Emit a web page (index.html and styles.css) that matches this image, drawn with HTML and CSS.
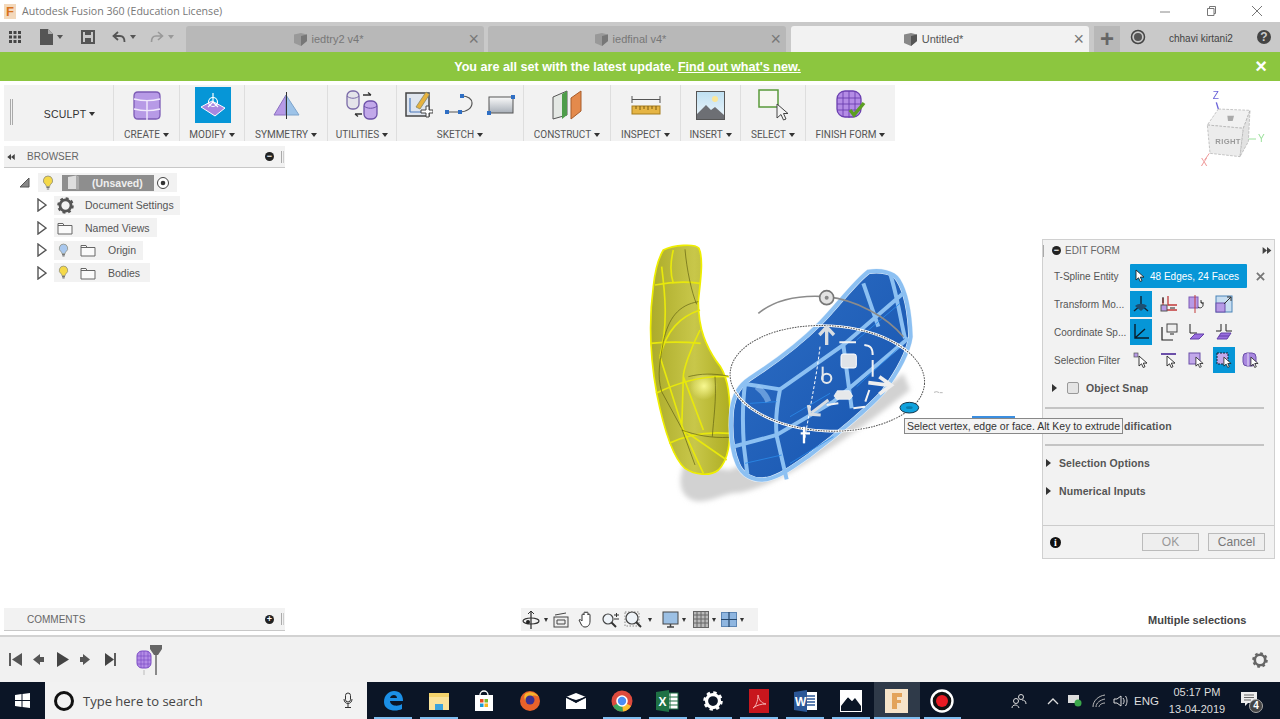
FILE: index.html
```html
<!DOCTYPE html>
<html lang="en">
<head>
    <meta charset="UTF-8">
    <title>Autodesk Fusion 360 (Education License)</title>
    <link rel="stylesheet" href="styles.css">
</head>
<body>
    <svg class="defs" width="0" height="0">
        <defs>
            <symbol id="bulb" viewBox="0 0 12 16">
                <path d="M6 1a4.6 4.6 0 0 0-2.6 8.4c.6.6.8 1.4.9 2.1h3.4c.1-.7.3-1.500.9-2.1A4.6 4.6 0 0 0 6 1z" fill="currentColor" stroke="#8a8a7a" stroke-width=".8"/>
                <path d="M4.4 12.5h3.2M4.8 14h2.4" stroke="#777" stroke-width="1.1"/>
            </symbol>
            <symbol id="folder" viewBox="0 0 16 14">
                <path d="M1 2.5h5l1 2h8V13H1z" fill="#fafafa" stroke="#666"/>
                <path d="M1 4.5h6" stroke="#666"/>
            </symbol>
            <symbol id="gear" viewBox="0 0 16 16">
                <circle cx="8" cy="8" r="5.2" fill="none" stroke="currentColor" stroke-width="2.6"/>
                <circle cx="8" cy="8" r="6.8" fill="none" stroke="currentColor" stroke-width="2" stroke-dasharray="2.7 2.64"/>
            </symbol>
            <symbol id="pointer" viewBox="0 0 10 14">
                <path d="M1 1v10l2.5-2.2 1.7 3.7 1.800-.8-1.700-3.600H9z" fill="#fff" stroke="#222" stroke-width=".9"/>
            </symbol>
            <symbol id="arrows-left" viewBox="0 0 10 8">
                <path d="M5 0v8L0 4zM10 0v8L5 4z" fill="#444"/>
            </symbol>
            <symbol id="arrows-right" viewBox="0 0 10 8">
                <path d="M0 0v8l5-4zM5 0v8l5-4z" fill="#444"/>
            </symbol>
        </defs>
    </svg>

    <div class="app">
        <header class="titlebar">
            <span class="app-badge">F</span>
            <span class="title-text">Autodesk Fusion 360 (Education License)</span>
            <div class="window-btns">
                <svg width="14" height="14" viewBox="0 0 14 14"><path d="M2 8h10" stroke="#888"/></svg>
                <svg width="14" height="14" viewBox="0 0 14 14"><path d="M3.5 4.500h6.500v7H3.500zM5.500 4.500v-2h6v7H10" fill="none" stroke="#777"/></svg>
                <svg width="14" height="14" viewBox="0 0 14 14"><path d="M2 2l10 10M12 2L2 12" stroke="#777"/></svg>
            </div>
        </header>

        <div class="tabbar">
            <div class="quick-icons">
                <svg width="14" height="14" viewBox="0 0 14 14"><path d="M1 1h3v3H1zM5.500 1h3v3h-3zM10 1h3v3h-3zM1 5.500h3v3H1zM5.500 5.500h3v3h-3zM10 5.500h3v3h-3zM1 10h3v3H1zM5.500 10h3v3h-3zM10 10h3v3h-3z" fill="#444"/></svg>
                <svg class="qi-file" width="13" height="16" viewBox="0 0 13 16"><path d="M0 0h8l5 5v11H0z" fill="#555"/><path d="M8 0v5h5" fill="#aaa"/></svg><i class="caret qi-caret"></i>
                <svg class="qi-save" width="14" height="14" viewBox="0 0 14 14"><path d="M1 1h12v12H1z" fill="none" stroke="#555" stroke-width="2"/><path d="M4 1h6v4H4zM4 8h6v5H4z" fill="#555"/></svg>
                <svg class="qi-undo" width="14" height="12" viewBox="0 0 14 12"><path d="M6 1L1.500 5 6 9M2 5h6c3 0 4.500 2 4.500 6" fill="none" stroke="#555" stroke-width="1.800"/></svg><i class="caret qi-caret"></i>
                <svg class="qi-redo" width="14" height="12" viewBox="0 0 14 12"><path d="M8 1l4.500 4L8 9M12 5H6c-3 0-4.500 2-4.500 6" fill="none" stroke="#999" stroke-width="1.600"/></svg><i class="caret qi-caret light"></i>
            </div>
            <div class="tab">
                <svg class="doc-cube" width="15" height="15" viewBox="0 0 15 15"><path d="M1 2.500L8 1l6 1.500V9l-6 5-7-3z" fill="#999"/><path d="M8 4l6-1.500V9l-6 5z" fill="#777"/></svg>
                <span>iedtry2 v4*</span>
                <span class="tab-close">×</span>
            </div>
            <div class="tab second">
                <svg class="doc-cube" width="15" height="15" viewBox="0 0 15 15"><path d="M1 2.500L8 1l6 1.500V9l-6 5-7-3z" fill="#999"/><path d="M8 4l6-1.500V9l-6 5z" fill="#777"/></svg>
                <span>iedfinal v4*</span>
                <span class="tab-close">×</span>
            </div>
            <div class="tab active">
                <svg class="doc-cube" width="15" height="15" viewBox="0 0 15 15"><path d="M1 2.500L8 1l6 1.500V9l-6 5-7-3z" fill="#888"/><path d="M8 4l6-1.500V9l-6 5z" fill="#555"/></svg>
                <span>Untitled*</span>
                <span class="tab-close">×</span>
            </div>
            <div class="tab-add">+</div>
            <svg class="job-clock" width="16" height="16" viewBox="0 0 16 16"><circle cx="8" cy="8" r="6.500" fill="none" stroke="#444" stroke-width="1.500"/><circle cx="8" cy="8" r="4" fill="#555"/></svg>
            <span class="user-name">chhavi kirtani2</span>
            <span class="help-btn">?</span>
        </div>

        <div class="banner">
            <span>You are all set with the latest update. <a href="#">Find out what's new.</a></span>
            <span class="banner-close">×</span>
        </div>

        <main class="workspace">
            <svg class="model" width="320" height="280" viewBox="0 0 960 840">
                <defs>
                    <filter id="soft" x="-20%" y="-20%" width="140%" height="140%"><feGaussianBlur stdDeviation="8"/></filter>
                    <linearGradient id="yellowFill" x1="0" y1="0" x2="1" y2="0">
                        <stop offset="0" stop-color="#acab2a"/>
                        <stop offset=".55" stop-color="#c8c74a"/>
                        <stop offset="1" stop-color="#aead22"/>
                    </linearGradient>
                    <radialGradient id="yellowGlow">
                        <stop offset="0" stop-color="#f8f890"/>
                        <stop offset="1" stop-color="#f8f890" stop-opacity="0"/>
                    </radialGradient>
                    <linearGradient id="blueFill" x1="0" y1="0" x2="1" y2="1">
                        <stop offset="0" stop-color="#2f70c6"/>
                        <stop offset="1" stop-color="#1552ad"/>
                    </linearGradient>
                </defs>
                <path d="M165 700c-30 60-10 118 50 114 50-6 70-26 115-26 100-18 270-118 510-308l-20-50-222 170-300 120z" fill="#d2d2d2" filter="url(#soft)"/>
                <path d="M100 60c30-15 95-20 107-5 15 35 3 105-2 160 0 85 25 135 55 180 30 35 40 85 40 165 2 80-5 130-35 160-25 20-70 15-100-5-40-35-65-125-85-225C60 380 55 280 70 170c5-50 15-85 30-110z" fill="url(#yellowFill)" stroke="#eeee00" stroke-width="5"/>
                <circle cx="222" cy="468" r="42" fill="url(#yellowGlow)"/>
                <g fill="none" stroke="#e8e80c" stroke-width="5">
                    <path d="M75 165c50-10 90-12 135-5M62 340c50-5 100-5 150 0M78 490c60-30 130-55 220-50M118 640c60-30 120-35 180-30"/>
                    <path d="M210 240c-60 20-100 60-120 140M90 380l70 220 60 130M210 300c-30 60-50 120-50 140l-5 160M160 600l130 90M95 110c10 80 20 170-5 270M130 60c-10 40-10 70 0 100M160 440l60 160"/>
                </g>
                <g fill="none" stroke="#5f5f10" stroke-width="2">
                    <path d="M165 58c5 60 20 130 35 165M205 215c-60 10-90 50-105 120-10 60-20 100-5 150l60 110 40 110"/>
                    <path d="M175 440c40-10 70-10 120-2M255 440c5 70-5 130-8 180M155 600c40 15 90 25 142 22"/>
                </g>
                <path d="M715 125c35-5 75 0 90 25 25 40 35 110 37 170-7 50-42 110-82 165-45 50-140 130-220 190-50 35-90 65-130 73-40 7-75-13-88-48-17-40-22-100-17-160 7-50 25-75 55-95 70-45 150-105 210-165 50-50 100-120 145-155z" fill="url(#blueFill)" stroke="#e8f2fb" stroke-width="15"/>
                <g fill="none" stroke="#8cc0f2" stroke-width="12">
                    <path d="M715 125c35-5 75 0 90 25 25 40 35 110 37 170-7 50-42 110-82 165-45 50-140 130-220 190-50 35-90 65-130 73-40 7-75-13-88-48-17-40-22-100-17-160 7-50 25-75 55-95 70-45 150-105 210-165 50-50 100-120 145-155z"/>
                    <path d="M450 478L640 345 825 185M310 650l130-35 170-100 225-190M345 462l105 16c-10 50-15 90-10 140l30 130M345 462c-8 60-8 120-3 190l10 80M640 345l25 190M780 130c20 60 30 130 45 195M700 160L745 290"/>
                </g>
                <g fill="none" stroke="#2a8bea" stroke-width="3" opacity=".8">
                    <path d="M360 520l80-5M345 700l110-25M480 700l130-80M480 560l120-70M680 470l130-120M680 330l130-110"/>
                </g>
                <path d="M380 470c20 15 30 30 35 45" stroke="#9cc8f4" stroke-width="18" opacity=".55" fill="none"/>
                <path d="M385 250c55-45 135-55 205-50 90 10 180 60 230 120" fill="none" stroke="#8b8b8b" stroke-width="5"/>
                <ellipse cx="592" cy="445" rx="292" ry="158" transform="rotate(3 592 445)" fill="none" stroke="#fff" stroke-width="8"/>
                <ellipse cx="592" cy="445" rx="292" ry="158" transform="rotate(3 592 445)" fill="none" stroke="#555" stroke-width="3" stroke-dasharray="5 3"/>
                <path d="M570 350c-10 90-30 180-48 290" fill="none" stroke="#fff" stroke-width="3" stroke-dasharray="9 6"/>
                <path d="M512 610h28M522 590v50" stroke="#fff" stroke-width="7"/>
                <path d="M590 345v-50M568 315l22-24 22 24" fill="none" stroke="#d8dde2" stroke-width="10"/>
                <path d="M715 458l65 8M748 440l36 26-36 26" fill="none" stroke="#eee" stroke-width="11"/>
                <path d="M595 510l-50 38M535 525l5 28 32 2" fill="none" stroke="#d8dde2" stroke-width="9"/>
                <path d="M628 337h50M703 345c20 2 25 10 25 30M728 390v50M718 480l-12 35M705 530l-35 5M625 520l-35 5" fill="none" stroke="#f2f2f2" stroke-width="6"/>
                <path d="M578 410v40" stroke="#e4e8ec" stroke-width="6"/>
                <circle cx="590" cy="445" r="14" fill="none" stroke="#e4e8ec" stroke-width="6"/>
                <rect x="633" y="372" width="46" height="42" rx="7" fill="#dfe3e8" stroke="#fff" stroke-width="3"/>
                <path d="M622 482h36l10 16-8 10h-40l-8-10z" fill="#e6e8ea" stroke="#fff" stroke-width="2"/>
                <circle cx="590" cy="203" r="21" fill="#e2e2e2" stroke="#777" stroke-width="5"/>
                <circle cx="590" cy="203" r="6" fill="#888"/>
                <ellipse cx="838" cy="533" rx="28" ry="16" fill="#10a2dd" stroke="#17364a" stroke-width="3"/>
                <ellipse cx="838" cy="533" rx="10" ry="4" fill="#0b7cab"/>
                <path d="M912 487l8-2 8 3M930 488h8" stroke="#aaa" stroke-width="2.500" fill="none"/>
            </svg>

            <svg class="viewcube" width="80" height="85" viewBox="0 0 240 255">
                <path d="M85 72L180 76l-20 54L52 120z" fill="#f1f1f1" stroke="#aaa" stroke-width="2" stroke-dasharray="8 4"/>
                <path d="M52 120l108 10-10 85-90-10z" fill="#ececec" stroke="#aaa" stroke-width="2" stroke-dasharray="8 4"/>
                <path d="M160 130l20-54-5 94-25 45z" fill="#e2e2e2" stroke="#aaa" stroke-width="2" stroke-dasharray="8 4"/>
                <path d="M85 72l-6-20" stroke="#6a63d8" stroke-width="4"/>
                <path d="M176 162h22" stroke="#9be09b" stroke-width="3"/>
                <path d="M58 205l-14 20" stroke="#ee9a9a" stroke-width="3"/>
                <text class="cube-face" x="76" y="176">RIGHT</text>
                <text class="cube-z" x="68" y="42">Z</text>
                <text class="cube-y" x="204" y="172">Y</text>
                <text class="cube-x" x="32" y="242">X</text>
                <path d="M112 92h20l-4 16h-14z" fill="#aaa"/>
            </svg>

            <nav class="toolbar">
                <div class="tool-group sculpt">
                    <i class="grip"></i>
                    <span>SCULPT</span><i class="caret"></i>
                </div>
                <div class="tool-group w-create">
                    <div class="tool-icons">
                        <svg width="30" height="31" viewBox="0 0 30 31"><path d="M6 2h18q4 0 4 4v19q0 4-4 4H6q-4 0-4-4V6q0-4 4-4z" fill="#b79ae6" stroke="#7c5bb5" stroke-width="1.300"/><path d="M2 9c8 2 18 2 26 0M2 19c8 2 18 2 26 0M15 11v19" fill="none" stroke="#f1eafc" stroke-width="1.400"/></svg>
                    </div>
                    <span class="tool-label">CREATE<i class="caret"></i></span>
                </div>
                <div class="tool-group w-modify">
                    <div class="tool-icons">
                        <div class="tool-active">
                            <svg width="30" height="30" viewBox="0 0 30 30"><path d="M3 17l11-6 13 7-10 8z" fill="#a987e0" stroke="#fff"/><path d="M15 3v9M15 12l-5 5M15 12l5 5" stroke="#fff" stroke-width="1.200"/><circle cx="15" cy="12" r="4.500" fill="none" stroke="#fff" stroke-width="1.200"/></svg>
                        </div>
                    </div>
                    <span class="tool-label">MODIFY<i class="caret"></i></span>
                </div>
                <div class="tool-group w-symmetry">
                    <div class="tool-icons">
                        <svg width="27" height="27" viewBox="0 0 27 27"><path d="M13 3L1 23h12z" fill="#b79ae6" stroke="#8a70c0"/><path d="M13 3l13 20H13z" fill="#9dc3e8" stroke="#7da4cc"/><path d="M13.500 0v27" stroke="#333"/></svg>
                    </div>
                    <span class="tool-label">SYMMETRY<i class="caret"></i></span>
                </div>
                <div class="tool-group w-utilities">
                    <div class="tool-icons">
                        <svg width="32" height="30" viewBox="0 0 32 30"><rect x="1" y="1" width="12" height="18" rx="5" fill="#e4e4ea" stroke="#7a6aa8" stroke-width="1.300"/><path d="M1 6c3 3 9 3 12 0" fill="none" stroke="#7a6aa8"/><rect x="18" y="11" width="13" height="18" rx="5" fill="#c2a8ea" stroke="#6c50a8" stroke-width="1.300"/><path d="M18 16c3 3 10 3 13 0" fill="none" stroke="#6c50a8"/><path d="M17 5h8M25 5l-3-2.500M16 24H9M9 24l3 2.500" stroke="#333" stroke-width="1.300" fill="none"/></svg>
                    </div>
                    <span class="tool-label">UTILITIES<i class="caret"></i></span>
                </div>
                <div class="tool-group w-sketch">
                    <div class="tool-icons gap-sketch">
                        <svg width="28" height="30" viewBox="0 0 28 30"><rect x="1" y="3" width="23" height="23" fill="#dfe5ee" stroke="#444" stroke-width="1.500"/><path d="M5 22L5 8M5 22h15" stroke="#4a78bc" stroke-width="1.200"/><path d="M11 17L21 2l3.500 2.500L15 19z" fill="#e7b23e" stroke="#886" stroke-width=".8"/><path d="M16 20h5v-4h3v4h4v3h-4v4h-3v-4h-5z" fill="#fff" stroke="#444"/></svg>
                        <svg width="30" height="22" viewBox="0 0 30 22"><path d="M1 18h13c8 0 13-4 13-9 0-4-4-7-10-7" fill="none" stroke="#555" stroke-width="1.200"/><path d="M0 16h4v4H0zM13 16h4v4h-4zM15 0h4v4h-4z" fill="#2f6fc4"/></svg>
                        <svg width="28" height="20" viewBox="0 0 28 20"><defs><linearGradient id="sketchRect" x1="0" y1="0" x2="0" y2="1"><stop offset="0" stop-color="#fafafa"/><stop offset="1" stop-color="#a8afb8"/></linearGradient></defs><rect x="2" y="2" width="24" height="16" fill="url(#sketchRect)" stroke="#555"/><path d="M0 16h4v4H0zM24 0h4v4h-4z" fill="#2f6fc4"/></svg>
                    </div>
                    <span class="tool-label">SKETCH<i class="caret"></i></span>
                </div>
                <div class="tool-group w-construct">
                    <div class="tool-icons">
                        <svg width="30" height="30" viewBox="0 0 30 30"><path d="M1 7L15 1v24L1 29z" fill="#e4e8e4" stroke="#555"/><path d="M10 4l5-3v24l-5 4z" fill="#4e9c4a"/><path d="M19 8l10-7v20l-10 8z" fill="#e48a4c" stroke="#a85c2a"/></svg>
                    </div>
                    <span class="tool-label">CONSTRUCT<i class="caret"></i></span>
                </div>
                <div class="tool-group w-inspect">
                    <div class="tool-icons">
                        <svg width="30" height="22" viewBox="0 0 30 22"><path d="M1 2v7M29 2v7M1 5.500h28" stroke="#555"/><rect x="1" y="12" width="28" height="8" fill="#e6b544" stroke="#a67c1c"/><path d="M5 12v3M9 12v4M13 12v3M17 12v4M21 12v3M25 12v4" stroke="#7a5a10"/></svg>
                    </div>
                    <span class="tool-label">INSPECT<i class="caret"></i></span>
                </div>
                <div class="tool-group w-insert">
                    <div class="tool-icons">
                        <svg width="29" height="29" viewBox="0 0 29 29"><defs><linearGradient id="insertSky" x1="0" y1="0" x2="0" y2="1"><stop offset="0" stop-color="#bfe0f2"/><stop offset="1" stop-color="#eef6fb"/></linearGradient></defs><rect x=".5" y=".5" width="28" height="28" fill="url(#insertSky)" stroke="#555"/><circle cx="19" cy="8" r="3" fill="#fbe79a"/><path d="M1 28V23l9-9 5 5 4-3 9 8v4z" fill="#6d6f74"/></svg>
                    </div>
                    <span class="tool-label">INSERT<i class="caret"></i></span>
                </div>
                <div class="tool-group w-select">
                    <div class="tool-icons">
                        <svg width="30" height="32" viewBox="0 0 30 32"><rect x="1" y="1" width="19" height="17" fill="#f7f7f2" stroke="#5a9a3a" stroke-width="1.500"/><path d="M19 15v14l4-3.500 2.500 5.500 2.500-1-2.500-5.500H30z" fill="#f4f4f4" stroke="#444"/></svg>
                    </div>
                    <span class="tool-label">SELECT<i class="caret"></i></span>
                </div>
                <div class="tool-group w-finish">
                    <div class="tool-icons">
                        <svg width="30" height="30" viewBox="0 0 30 30"><rect x="1" y="1" width="24" height="26" rx="8" fill="#b48ce6" stroke="#6b3fb0" stroke-width="1.300"/><path d="M1 8h24M1 14h24M1 20h24M7 2v25M13 1v27M19 2v25" stroke="#6b3fb0" stroke-width=".9"/><path d="M14 20l4 5 10-12" fill="none" stroke="#5c9e22" stroke-width="3.500"/></svg>
                    </div>
                    <span class="tool-label">FINISH FORM<i class="caret"></i></span>
                </div>
            </nav>

            <section class="browser-head">
                <svg class="arrows" width="8" height="6"><use href="#arrows-left"/></svg>
                <span class="panel-title">BROWSER</span>
                <span class="panel-dot">−</span>
                <i class="pipe"></i>
            </section>

            <ul class="tree">
                <li class="tree-row root">
                    <svg class="expander" width="11" height="11" viewBox="0 0 11 11"><path d="M10 1v9H1z" fill="#888" stroke="#555"/></svg>
                    <div class="tree-chip root-chip">
                        <svg class="bulb on" width="12" height="16"><use href="#bulb"/></svg>
                        <span class="unsaved">
                            <svg width="13" height="15" viewBox="0 0 13 15"><path d="M1 2l8-1.500 3 1.500v12H1z" fill="#ddd"/><path d="M9 .5v14h3V2z" fill="#aaa"/></svg>
                            <b>(Unsaved)</b>
                        </span>
                        <svg class="radio" width="14" height="14" viewBox="0 0 14 14"><circle cx="7" cy="7" r="5.500" fill="#fff" stroke="#444"/><circle cx="7" cy="7" r="2.300" fill="#333"/></svg>
                    </div>
                </li>
                <li class="tree-row">
                    <svg class="expander" width="11" height="14" viewBox="0 0 11 14"><path d="M2 1l8 6-8 6z" fill="#fff" stroke="#555" stroke-width="1.400"/></svg>
                    <div class="tree-chip w-docs">
                        <svg class="gear" width="17" height="17"><use href="#gear"/></svg>
                        <span class="tree-text">Document Settings</span>
                    </div>
                </li>
                <li class="tree-row">
                    <svg class="expander" width="11" height="14" viewBox="0 0 11 14"><path d="M2 1l8 6-8 6z" fill="#fff" stroke="#555" stroke-width="1.400"/></svg>
                    <div class="tree-chip w-views">
                        <svg class="folder" width="16" height="14"><use href="#folder"/></svg>
                        <span class="tree-text">Named Views</span>
                    </div>
                </li>
                <li class="tree-row">
                    <svg class="expander" width="11" height="14" viewBox="0 0 11 14"><path d="M2 1l8 6-8 6z" fill="#fff" stroke="#555" stroke-width="1.400"/></svg>
                    <div class="tree-chip w-origin">
                        <svg class="bulb off" width="11" height="15"><use href="#bulb"/></svg>
                        <svg class="folder" width="16" height="14"><use href="#folder"/></svg>
                        <span class="tree-text">Origin</span>
                    </div>
                </li>
                <li class="tree-row">
                    <svg class="expander" width="11" height="14" viewBox="0 0 11 14"><path d="M2 1l8 6-8 6z" fill="#fff" stroke="#555" stroke-width="1.400"/></svg>
                    <div class="tree-chip w-bodies">
                        <svg class="bulb on" width="11" height="15"><use href="#bulb"/></svg>
                        <svg class="folder" width="16" height="14"><use href="#folder"/></svg>
                        <span class="tree-text">Bodies</span>
                    </div>
                </li>
            </ul>

            <aside class="edit-form">
                <div class="form-head">
                    <i class="pipe"></i>
                    <span class="panel-dot">−</span>
                    <span class="panel-title">EDIT FORM</span>
                    <svg class="arrows right" width="10" height="7"><use href="#arrows-right"/></svg>
                </div>
                <div class="form-row">
                    <span class="form-label">T-Spline Entity</span>
                    <div class="entity-pill">
                        <svg width="10" height="14"><use href="#pointer"/></svg>
                        <span>48 Edges, 24 Faces</span>
                    </div>
                    <svg class="entity-clear" width="9" height="9" viewBox="0 0 10 10"><path d="M1 1l8 8M9 1L1 9" stroke="#777" stroke-width="2"/></svg>
                </div>
                <div class="form-row">
                    <span class="form-label">Transform Mo...</span>
                    <div class="icon-set">
                        <div class="icon-cell on"><svg width="18" height="18" viewBox="0 0 18 18"><path d="M9 1v9M9 10l-7 6M9 10l7 6" stroke="#123" stroke-width="1.400"/><path d="M3 11c3-3 9-3 12 0l-6 5z" fill="#1d4e72"/></svg></div>
                        <div class="icon-cell"><svg width="18" height="18" viewBox="0 0 18 18"><path d="M8 1v9h9M3 3v12h14" fill="none" stroke="#c23a3a" stroke-width="1.300"/><rect x="1" y="10" width="6" height="6" fill="#b79ae6" stroke="#555"/><path d="M3 8V2M10 13h5" stroke="#222"/></svg></div>
                        <div class="icon-cell"><svg width="18" height="18" viewBox="0 0 18 18"><rect x="2" y="2" width="9" height="11" fill="#b79ae6" stroke="#7c5bb5"/><path d="M8 0v18" stroke="#c23a3a"/><path d="M11 12a3 3 0 1 0 3-5M14 5v3h3" fill="none" stroke="#333"/></svg></div>
                        <div class="icon-cell"><svg width="18" height="18" viewBox="0 0 18 18"><rect x="1" y="1" width="16" height="16" fill="#c7ddf0" stroke="#4a84b8"/><rect x="1" y="8" width="9" height="9" fill="#b79ae6" stroke="#6b4fa8"/><path d="M9 9l7-7M12 2h4v4" fill="none" stroke="#333"/></svg></div>
                    </div>
                </div>
                <div class="form-row">
                    <span class="form-label">Coordinate Sp...</span>
                    <div class="icon-set">
                        <div class="icon-cell on"><svg width="18" height="18" viewBox="0 0 18 18"><path d="M3 1v14h14M3 15L13 6" fill="none" stroke="#0a1c2a" stroke-width="1.400"/></svg></div>
                        <div class="icon-cell"><svg width="18" height="18" viewBox="0 0 18 18"><rect x="7" y="1" width="10" height="8" fill="#eee" stroke="#444"/><path d="M10 11h4M2 4v13h11" fill="none" stroke="#222" stroke-width="1.200"/></svg></div>
                        <div class="icon-cell"><svg width="18" height="18" viewBox="0 0 18 18"><path d="M3 1v9h7" fill="none" stroke="#222"/><path d="M3 16l5-5h9l-5 5z" fill="#9a6fe0" stroke="#6340a8"/></svg></div>
                        <div class="icon-cell"><svg width="18" height="18" viewBox="0 0 18 18"><path d="M6 1v7H1M11 1v7h6" fill="none" stroke="#222"/><path d="M2 16l4-6h10l-4 6z" fill="#9a6fe0" stroke="#6340a8"/><path d="M4 13h10" stroke="#6340a8"/></svg></div>
                    </div>
                </div>
                <div class="form-row">
                    <span class="form-label">Selection Filter</span>
                    <div class="icon-set">
                        <div class="icon-cell"><svg width="18" height="18" viewBox="0 0 18 18"><rect x="2" y="2" width="4" height="4" fill="#b79ae6" stroke="#555" stroke-width=".7"/><use href="#pointer" x="6" y="4" width="10" height="14"/></svg></div>
                        <div class="icon-cell"><svg width="18" height="18" viewBox="0 0 18 18"><path d="M1 3h15" stroke="#6b4fa8" stroke-width="2"/><use href="#pointer" x="6" y="4" width="10" height="14"/></svg></div>
                        <div class="icon-cell"><svg width="18" height="18" viewBox="0 0 18 18"><rect x="2" y="2" width="11" height="11" fill="#c2a8ea" stroke="#6b4fa8"/><use href="#pointer" x="8" y="5" width="9" height="13"/></svg></div>
                        <div class="icon-cell on"><svg width="18" height="18" viewBox="0 0 18 18"><rect x="2" y="2" width="11" height="11" fill="#c2a8ea" stroke="#123" stroke-dasharray="2 1"/><use href="#pointer" x="8" y="5" width="9" height="13"/></svg></div>
                        <div class="icon-cell"><svg width="18" height="18" viewBox="0 0 18 18"><rect x="1" y="2" width="13" height="13" rx="4" fill="#a887df" stroke="#6b4fa8"/><path d="M6 2v13" stroke="#e9e0f7"/><use href="#pointer" x="8" y="5" width="9" height="13"/></svg></div>
                    </div>
                </div>
                <div class="form-row snap">
                    <i class="tri"></i>
                    <i class="checkbox"></i>
                    <b class="bold-label">Object Snap</b>
                </div>
                <hr class="form-sep">
                <div class="form-row soft">
                    <b class="bold-label">dification</b>
                </div>
                <hr class="form-sep">
                <div class="form-row section">
                    <i class="tri"></i>
                    <b class="bold-label">Selection Options</b>
                </div>
                <div class="form-row section">
                    <i class="tri"></i>
                    <b class="bold-label">Numerical Inputs</b>
                </div>
                <div class="form-foot">
                    <span class="info-dot">i</span>
                    <button class="form-btn ok" type="button">OK</button>
                    <button class="form-btn" type="button">Cancel</button>
                </div>
            </aside>

            <i class="hint-bar"></i>
            <div class="tooltip">Select vertex, edge or face. Alt Key to extrude</div>

            <div class="bottom-row">
                <section class="comments">
                    <span class="panel-title">COMMENTS</span>
                    <span class="panel-dot">+</span>
                    <i class="pipe"></i>
                </section>
                <div class="navbar">
                    <svg width="20" height="20" viewBox="0 0 20 20"><path d="M10 1v18" stroke="#333" stroke-width="1.300"/><path d="M7 4l3-3 3 3" fill="none" stroke="#333"/><ellipse cx="10" cy="11" rx="8" ry="3" fill="none" stroke="#333" stroke-width="1.200"/><circle cx="7" cy="12" r="2" fill="#222"/></svg><i class="caret nav-caret"></i>
                    <svg class="nav-m5" width="16" height="16" viewBox="0 0 16 16"><rect x="1" y="5" width="14" height="10" fill="#eee" stroke="#444"/><path d="M4 8h8v4H4zM2 3l11-2" fill="none" stroke="#444"/></svg>
                    <svg class="nav-m9" width="16" height="17" viewBox="0 0 16 17"><path d="M4 9V4a1 1 0 0 1 2 0V2a1 1 0 0 1 2 0v0a1 1 0 0 1 2 0v2a1 1 0 0 1 2 0v6c0 4-2 6-5 6-2 0-3-1-4-3L1 9c1-1 2 0 3 1z" fill="#fff" stroke="#333"/></svg>
                    <svg class="nav-m7" width="18" height="16" viewBox="0 0 18 16"><circle cx="7" cy="7" r="5" fill="#eef3f8" stroke="#444" stroke-width="1.200"/><path d="M10.500 10.500L15 15" stroke="#333" stroke-width="2"/><path d="M13 3h5M15.500 1v4M13 7h5" stroke="#333"/></svg>
                    <svg class="nav-m5" width="20" height="18" viewBox="0 0 20 18"><path d="M1 1h14v14H1z" fill="none" stroke="#888" stroke-dasharray="1.500 1.500"/><circle cx="8" cy="7" r="6" fill="#eef3f8" stroke="#444" stroke-width="1.200"/><path d="M12 11l5 5" stroke="#333" stroke-width="2"/></svg><i class="caret nav-caret wide"></i>
                    <svg class="nav-m10" width="17" height="18" viewBox="0 0 17 18"><rect x="1" y="1" width="15" height="12" fill="#9cc0e4" stroke="#444"/><path d="M5 16h7M8.500 13v3" stroke="#444" stroke-width="1.500"/></svg><i class="caret nav-caret"></i>
                    <svg class="nav-m7" width="16" height="17" viewBox="0 0 16 17"><rect x=".5" y=".5" width="15" height="16" fill="#bbb" stroke="#666"/><path d="M4 0v17M8 0v17M12 0v17M0 4h16M0 8h16M0 12h16" stroke="#666"/></svg><i class="caret nav-caret"></i>
                    <svg class="nav-m5" width="16" height="15" viewBox="0 0 16 15"><rect x=".5" y=".5" width="15" height="14" fill="#8fb6e0" stroke="#5d86b4"/><path d="M8 0v15M0 7.500h16" stroke="#27486c" stroke-width="1.200"/></svg><i class="caret nav-caret"></i>
                </div>
                <span class="status">Multiple selections</span>
            </div>
        </main>

        <section class="timeline">
            <svg class="time-controls" width="160" height="36" viewBox="0 0 160 36">
                <path d="M2 9v13" stroke="#444" stroke-width="1.700"/><path d="M4 15.500L14 9v13z" fill="#555"/>
                <path d="M25 15.500l7-5.500v11zM32 13h4v5h-4z" fill="#555"/>
                <path d="M49 8l12 7.500L49 23z" fill="#444"/>
                <path d="M75 13h-3v5h3zM75 10l7 5.500-7 5.500z" fill="#555"/>
                <path d="M97 9l9 6.500-9 6.500z" fill="#444"/><path d="M107 9v13" stroke="#444" stroke-width="1.700"/>
                <rect x="129" y="7" width="14" height="17" rx="5" fill="#b48ce6" stroke="#7c4dc4"/>
                <path d="M129 12h14M129 16h14M129 20h14M133 7v17M136 7v17M140 7v17" stroke="#7c4dc4" stroke-width=".7"/>
                <path d="M136 26v5" stroke="#bbb"/>
                <path d="M142 1h12v4l-4 6h-4l-4-6z" fill="#666"/>
                <path d="M148 7v24" stroke="#666" stroke-width="1.500"/>
            </svg>
            <svg class="gear time-gear" width="16" height="16"><use href="#gear"/></svg>
        </section>

        <footer class="taskbar">
            <div class="start-btn">
                <svg width="15" height="15" viewBox="0 0 15 15"><path d="M0 2l6.500-1v6H0zM7.500 1L15 0v7H7.500zM0 8h6.500v6L0 13zM7.500 8H15v7l-7.500-1z" fill="#fff"/></svg>
            </div>
            <div class="search-box">
                <i class="cortana"></i>
                <span>Type here to search</span>
                <svg class="mic" width="10" height="17" viewBox="0 0 10 17"><rect x="2.500" y="1" width="5" height="9" rx="2.500" fill="none" stroke="#333"/><path d="M1 7c0 6 8 6 8 0M5 12v3M2 15.500h6" fill="none" stroke="#333"/></svg>
            </div>
            <div class="task-app open"><svg width="22" height="22" viewBox="0 0 22 22"><path d="M2 12C2 5 7 1 12 1c6 0 9 4 9 10H8c0 5 8 6 12 3v5c-6 3-18 2-18-7zm6-4h7c0-4-6-4-7 0z" fill="#1b8fe6"/></svg></div>
            <div class="task-app open"><svg width="22" height="20" viewBox="0 0 22 20"><path d="M1 2h20v17H1z" fill="#f4d36b"/><path d="M1 6h20v13H1z" fill="#fae39a"/><rect x="7" y="13" width="8" height="6" fill="#3aa3dc"/></svg></div>
            <div class="task-app"><svg width="20" height="23" viewBox="0 0 20 23"><path d="M6 6a4 4 0 0 1 8 0" fill="none" stroke="#fff" stroke-width="1.300"/><rect x="1" y="6" width="18" height="16" fill="#fff"/><path d="M6 10h3.500v3.500H6z" fill="#e74c24"/><path d="M10.500 10H14v3.500h-3.500z" fill="#7cb82f"/><path d="M6 14.500h3.500V18H6z" fill="#1a9cd8"/><path d="M10.500 14.500H14V18h-3.500z" fill="#f7b71e"/></svg></div>
            <div class="task-app"><svg width="22" height="22" viewBox="0 0 22 22"><circle cx="11" cy="11" r="10" fill="#e9622a"/><path d="M6 4c4-3 11-2 14 3-3-2-7-2-8 0 3 0 4 3 2 5-2 3-7 2-8-2-1-2-1-4 0-6z" fill="#f6b32c"/><circle cx="11" cy="10" r="4.500" fill="#3b2f8f"/></svg></div>
            <div class="task-app"><svg width="22" height="16" viewBox="0 0 22 16"><path d="M1 4l10-4 10 4v12H1z" fill="#fff"/><path d="M1 4l10 6 10-6-10 3z" fill="#0a1426"/><path d="M1 4l10 5 10-5" fill="none" stroke="#0a1426" stroke-width="1.500"/></svg></div>
            <div class="task-app open"><svg width="22" height="22" viewBox="0 0 22 22"><circle cx="11" cy="11" r="10.500" fill="#dd4b3e"/><path d="M11 11L2 16a10.500 10.500 0 0 0 10 5.500z" fill="#3ba55d"/><path d="M11 11l9 5a10.500 10.500 0 0 1-8 5.500z" fill="#fbc02d"/><circle cx="11" cy="11" r="5" fill="#4b8df5" stroke="#fff" stroke-width="1.600"/></svg></div>
            <div class="task-app open"><svg width="23" height="22" viewBox="0 0 23 22"><rect x="7" y="3" width="15" height="16" fill="#fff" stroke="#1e7145"/><path d="M14 3v16M8 7h14M8 11h14M8 15h14" stroke="#1e7145"/><path d="M0 2l13-2v22L0 20z" fill="#1e7145"/><text class="xl-letter" x="2.500" y="16">X</text></svg></div>
            <div class="task-app open"><svg class="task-gear" width="20" height="20"><use href="#gear"/></svg></div>
            <div class="task-app open"><svg width="20" height="24" viewBox="0 0 20 24"><rect width="20" height="24" fill="#c8161d"/><path d="M4 19c3-2 5-7 5-13 1 5 3 8 8 9-5 0-9 1-13 4z" fill="none" stroke="#f4b0b0"/></svg></div>
            <div class="task-app open"><svg width="23" height="22" viewBox="0 0 23 22"><rect x="8" y="2" width="15" height="18" fill="#fff"/><path d="M12 6h9M12 9h9M12 12h9M12 15h9" stroke="#2b5797" stroke-width="1.300"/><path d="M0 2l13-2v22L0 20z" fill="#2b5797"/><text class="xl-letter" x="1" y="15.500">W</text></svg></div>
            <div class="task-app open"><svg width="22" height="22" viewBox="0 0 22 22"><rect width="22" height="22" fill="#fff"/><path d="M1 21V16l7-9 4 4 3-3 6 8v5z" fill="#0b1626"/><path d="M0 0h22v9l-7-2-3 4-4-4-8 8z" fill="#fff"/></svg></div>
            <div class="task-app open active"><svg width="23" height="24" viewBox="0 0 23 24"><rect width="23" height="24" fill="#f6e3c9"/><path d="M7 4h10v4h-5v3h4v3h-4v6H7z" fill="#e3a35a"/></svg></div>
            <div class="task-app open"><svg width="24" height="24" viewBox="0 0 24 24"><circle cx="12" cy="12" r="10.500" fill="#111" stroke="#fff" stroke-width="2.400"/><circle cx="12" cy="12" r="6" fill="#e81b23"/></svg></div>
            <div class="tray">
                <svg class="tr-people" width="16" height="16" viewBox="0 0 16 16"><circle cx="10" cy="4" r="2.500" fill="none" stroke="#ddd"/><circle cx="5" cy="8" r="2.500" fill="none" stroke="#ddd"/><path d="M1 15c0-4 6-4 7 0M11 7c2 0 4 1 4 4" fill="none" stroke="#ddd"/></svg>
                <svg class="tr-up" width="12" height="8" viewBox="0 0 12 8"><path d="M1 7l5-5 5 5" fill="none" stroke="#ddd" stroke-width="1.300"/></svg>
                <svg class="tr-net" width="14" height="13" viewBox="0 0 14 13"><rect y="1" width="11" height="8" fill="#ddd"/><circle cx="10" cy="9" r="3.500" fill="#3aa84a"/></svg>
                <svg class="tr-wifi" width="14" height="14" viewBox="0 0 14 14"><path d="M1 13C1 7 6 2 13 1M4 13c0-4 4-7 9-8M7 13c0-2 3-4 6-4" fill="none" stroke="#bbb"/></svg>
                <svg class="tr-vol" width="15" height="14" viewBox="0 0 15 14"><path d="M1 5h3l4-3v10l-4-3H1zM10 4c1.500 2 1.500 4 0 6M12.500 2c2 3 2 7 0 10" fill="none" stroke="#ddd"/></svg>
                <span class="tr-lang">ENG</span>
                <div class="tr-clock"><span>05:17 PM</span><span>13-04-2019</span></div>
                <div class="tr-note">
                    <svg width="16" height="15" viewBox="0 0 16 15"><path d="M0 0h16v11H7l-3 3v-3H0z" fill="#eee"/><path d="M3 3h10M3 5.500h10M3 8h7" stroke="#666"/></svg>
                    <span class="note-badge">4</span>
                </div>
            </div>
        </footer>
    </div>
</body>
</html>
```

FILE: styles.css
```css
* {
    box-sizing: border-box;
}
html, body {
    margin: 0;
    height: 100%;
    overflow: hidden;
    background-color: #fff;
}
body {
    font-family: "Liberation Sans", Arial, sans-serif;
    font-size: 11px;
    color: #555;
}
i {
    font-style: normal;
}
.defs {
    position: absolute;
}
.app {
    width: 1280px;
    height: 719px;
    display: flex;
    flex-direction: column;
}
.caret {
    display: inline-block;
    width: 0;
    height: 0;
    margin-left: 3px;
    border-left: 3px solid transparent;
    border-right: 3px solid transparent;
    border-top: 4px solid #333;
    vertical-align: 1px;
}

/* title bar */
.titlebar {
    height: 22px;
    flex: none;
    display: flex;
    align-items: center;
    padding-left: 4px;
    background-color: #fff;
}
.app-badge {
    width: 12px;
    height: 15px;
    background-color: #f3d9bc;
    color: #d9731c;
    font-weight: bold;
    font-size: 13px;
    line-height: 15px;
    text-align: center;
}
.title-text {
    margin-left: 6px;
    font-family: "Open Sans", sans-serif;
    font-size: 10.6px;
    color: #777;
}
.window-btns {
    margin-left: auto;
    margin-right: 16px;
    display: flex;
    gap: 32px;
}

/* tabs */
.tabbar {
    height: 30px;
    flex: none;
    display: flex;
    align-items: flex-end;
    background-color: #c9c9c9;
}
.quick-icons {
    width: 186px;
    height: 30px;
    flex: none;
    display: flex;
    align-items: center;
    padding-left: 8px;
}
.qi-file {
    margin-left: 18px;
}
.qi-caret {
    margin-left: 4px;
    border-top-color: #555;
}
.qi-caret.light {
    border-top-color: #999;
}
.qi-save {
    margin-left: 18px;
}
.qi-undo {
    margin-left: 17px;
}
.qi-redo {
    margin-left: 14px;
}
.tab {
    width: 298px;
    height: 26px;
    flex: none;
    display: flex;
    align-items: center;
    justify-content: center;
    gap: 4px;
    padding-right: 14px;
    position: relative;
    background-color: #b8b8b8;
    border-radius: 3px 3px 0 0;
    color: #777;
    font-size: 11px;
}
.tab.second {
    margin-left: 4px;
}
.tab.active {
    margin-left: 5px;
    background-color: #f2f2f2;
    color: #555;
}
.tab-close {
    position: absolute;
    right: 5px;
    top: 3px;
    font-size: 18px;
    line-height: 20px;
    color: #777;
}
.tab-add {
    width: 26px;
    height: 26px;
    margin-left: 5px;
    flex: none;
    background-color: #b8b8b8;
    color: #666;
    font-size: 24px;
    font-weight: bold;
    line-height: 25px;
    text-align: center;
}
.job-clock {
    margin: 0 0 7px 10px;
}
.user-name {
    width: 64px;
    margin: 0 0 8px 23px;
    color: #444;
    font-size: 10px;
    white-space: nowrap;
}
.help-btn {
    width: 14px;
    height: 14px;
    margin: 0 0 8px 24px;
    border-radius: 50%;
    background-color: #444;
    color: #ccc;
    font-size: 12px;
    font-weight: bold;
    line-height: 14px;
    text-align: center;
}

/* update banner */
.banner {
    height: 29px;
    flex: none;
    display: flex;
    align-items: center;
    justify-content: center;
    padding-right: 25px;
    position: relative;
    background-color: #8cc63f;
    color: #fff;
    font-size: 12.6px;
    font-weight: bold;
}
.banner a {
    color: #fff;
}
.banner-close {
    position: absolute;
    right: 13px;
    top: 4px;
    font-size: 20px;
    line-height: 20px;
}

/* main area */
.workspace {
    flex: 1;
    position: relative;
    display: flex;
    flex-direction: column;
    padding: 4px 0 4px 4px;
    background-color: #fff;
    min-height: 0;
}
.model {
    position: absolute;
    left: 630px;
    top: 149px;
}
.viewcube {
    position: absolute;
    left: 1190px;
    top: 4px;
    filter: blur(.5px);
}
.cube-face {
    font-family: "Liberation Sans", sans-serif;
    font-size: 23px;
    font-weight: bold;
    fill: #9a9a9a;
    letter-spacing: 1px;
}
.cube-z, .cube-y, .cube-x {
    font-family: "Liberation Sans", sans-serif;
    font-size: 30px;
}
.cube-z { fill: #6a63d8; }
.cube-y { fill: #9be09b; }
.cube-x { fill: #ee9a9a; }

.toolbar {
    position: relative;
    width: 891px;
    height: 56px;
    flex: none;
    display: flex;
    background-color: #f2f2f2;
}
.tool-group {
    height: 56px;
    flex: none;
    display: flex;
    flex-direction: column;
    align-items: center;
    border-right: 1px solid #dedede;
}
.tool-group:last-child {
    border-right: none;
}
.sculpt {
    width: 110px;
    flex-direction: row;
    justify-content: center;
    padding: 2px 0 0 22px;
    position: relative;
    color: #333;
    font-size: 10.5px;
    letter-spacing: .2px;
}
.grip {
    position: absolute;
    left: 6px;
    top: 14px;
    width: 3px;
    height: 26px;
    border-left: 1px solid #aaa;
    border-right: 1px solid #aaa;
}
.w-create { width: 66px; }
.w-modify { width: 65px; }
.w-symmetry { width: 83px; }
.w-utilities { width: 69px; }
.w-sketch { width: 127px; }
.w-construct { width: 87px; }
.w-inspect { width: 70px; }
.w-insert { width: 60px; }
.w-select { width: 65px; }
.w-finish { width: 89px; }
.tool-icons {
    height: 40px;
    display: flex;
    align-items: center;
    justify-content: center;
}
.gap-sketch {
    gap: 12px;
}
.tool-active {
    width: 36px;
    height: 36px;
    margin-left: 2px;
    display: flex;
    align-items: center;
    justify-content: center;
    background-color: #0696d7;
}
.tool-label {
    height: 16px;
    color: #555;
    font-family: Roboto, "Liberation Sans", sans-serif;
    font-size: 10px;
    line-height: 20px;
    white-space: nowrap;
}

/* browser */
.browser-head, .comments {
    width: 281px;
    height: 22px;
    flex: none;
    display: flex;
    align-items: center;
    background-color: #f2f2f2;
    border-bottom: 1px solid #c8c8c8;
}
.browser-head {
    margin-top: 5px;
}
.panel-title {
    color: #666;
    font-size: 10px;
}
.arrows {
    flex: none;
}
.browser-head .arrows {
    margin: 0 12px 0 3px;
}
.arrows.right {
    margin-left: auto;
    margin-right: 2px;
}
.panel-dot {
    width: 9px;
    height: 9px;
    margin-left: auto;
    border-radius: 50%;
    background-color: #222;
    color: #fff;
    font-size: 9px;
    font-weight: bold;
    line-height: 9px;
    text-align: center;
}
.pipe {
    width: 3px;
    height: 12px;
    margin: 0 1px 0 7px;
    border-left: 1px solid #aaa;
    border-right: 1px solid #ccc;
}
.tree {
    list-style: none;
    margin: 5px 0 0;
    padding: 0;
    display: flex;
    flex-direction: column;
    gap: 3.5px;
}
.tree-row {
    height: 19px;
    display: flex;
    align-items: center;
    padding-left: 32px;
}
.tree-row.root {
    padding-left: 15px;
}
.expander {
    flex: none;
}
.tree-chip {
    height: 19px;
    margin-left: 7px;
    display: flex;
    align-items: center;
    background-color: #f2f2f2;
}
.root-chip {
    width: 139px;
    margin-left: 8px;
    padding-left: 4px;
}
.bulb.on { color: #f5d949; }
.bulb.off { color: #a9c8ee; }
.unsaved {
    width: 92px;
    height: 16px;
    margin-left: 8px;
    display: flex;
    align-items: center;
    background-color: #8e8e8e;
    color: #eee;
    padding-left: 5px;
    font-size: 10.5px;
}
.unsaved b {
    margin-left: 12px;
}
.radio {
    margin-left: 2px;
}
.gear {
    color: #555;
    margin-left: 3px;
}
.w-docs { width: 126px; }
.w-views { width: 103px; }
.w-origin { width: 89px; padding-left: 4px; }
.w-bodies { width: 96px; padding-left: 4px; }
.w-views .folder {
    margin-left: 3px;
}
.w-origin .folder, .w-bodies .folder {
    margin-left: 11px;
}
.tree-text {
    margin-left: 12px;
    color: #555;
    font-size: 10.5px;
    white-space: nowrap;
}
.w-docs .tree-text {
    margin-left: 11px;
}

/* edit form */
.edit-form {
    position: absolute;
    left: 1042px;
    top: 158px;
    width: 233px;
    height: 320px;
    background-color: #f2f2f2;
    border: 1px solid #d0d0d0;
    display: flex;
    flex-direction: column;
}
.form-head {
    height: 21px;
    margin-bottom: 1px;
    flex: none;
    display: flex;
    align-items: center;
    gap: 4px;
}
.form-head .pipe {
    margin: 0;
    border-right: none;
}
.form-head .panel-dot {
    margin-left: 2px;
}
.form-row {
    height: 28px;
    flex: none;
    display: flex;
    align-items: center;
    padding-left: 11px;
}
.form-label {
    width: 76px;
    flex: none;
    color: #555;
    font-size: 10px;
    white-space: nowrap;
}
.entity-pill {
    width: 117px;
    height: 24px;
    display: flex;
    align-items: center;
    gap: 5px;
    padding-left: 5px;
    background-color: #0696d7;
    border-radius: 1px;
    color: #fff;
    font-size: 10px;
}
.entity-clear {
    margin-left: 9px;
}
.icon-set {
    display: flex;
    gap: 5.5px;
}
.icon-cell {
    width: 22px;
    height: 26px;
    display: flex;
    align-items: center;
    justify-content: center;
}
.icon-cell.on {
    background-color: #0696d7;
}
.snap {
    padding-left: 9px;
}
.tri {
    width: 0;
    height: 0;
    flex: none;
    border-top: 4px solid transparent;
    border-bottom: 4px solid transparent;
    border-left: 5px solid #333;
}
.checkbox {
    width: 12px;
    height: 12px;
    margin-left: 10px;
    flex: none;
    border: 1px solid #999;
    border-radius: 2px;
    background-color: #e4e4e4;
}
.bold-label {
    margin-left: 7px;
    color: #555;
    font-size: 10.5px;
    letter-spacing: .1px;
    white-space: nowrap;
}
.form-sep {
    width: 219px;
    height: 2px;
    margin: 5px 0 3px 2px;
    flex: none;
    border: none;
    background-color: #c4c4c4;
}
.soft {
    height: 27px;
    padding-left: 0;
}
.soft .bold-label {
    margin-left: 81px;
}
.section {
    padding-left: 3px;
}
.section .bold-label {
    margin-left: 8px;
}
.form-foot {
    height: 33px;
    margin-top: auto;
    flex: none;
    display: flex;
    align-items: center;
    padding: 0 9px 0 7px;
    border-top: 1px solid #ccc;
}
.info-dot {
    width: 11px;
    height: 11px;
    border-radius: 50%;
    background-color: #111;
    color: #fff;
    font-family: "Liberation Serif", serif;
    font-size: 10px;
    font-weight: bold;
    line-height: 11px;
    text-align: center;
}
.form-btn {
    width: 57px;
    height: 18px;
    margin-left: 9px;
    padding: 0;
    font-family: "Liberation Sans", sans-serif;
    font-size: 12px;
    color: #777;
    background-color: #eee;
    border: 1px solid #bbb;
}
.form-btn.ok {
    margin-left: auto;
    color: #999;
}
.hint-bar {
    position: absolute;
    left: 972px;
    top: 335px;
    width: 43px;
    height: 3px;
    background-color: #3b8ee0;
}
.tooltip {
    position: absolute;
    left: 904px;
    top: 337px;
    width: 219px;
    height: 16px;
    padding-left: 2px;
    background-color: #f4f4f4;
    border: 1px solid #888;
    color: #333;
    font-size: 10.5px;
    line-height: 14px;
    white-space: nowrap;
}

/* bottom of the canvas */
.bottom-row {
    position: relative;
    margin-top: auto;
    display: flex;
    align-items: center;
}
.comments {
    height: 23px;
    padding-left: 23px;
}
.navbar {
    width: 237px;
    height: 23px;
    margin-left: 236px;
    display: flex;
    align-items: center;
    background-color: #f2f2f2;
}
.nav-caret {
    margin-left: 3px;
    border-left-width: 2.5px;
    border-right-width: 2.5px;
}
.nav-caret.wide {
    margin-left: 4px;
}
.nav-m5 { margin-left: 5px; }
.nav-m7 { margin-left: 7px; }
.nav-m9 { margin-left: 9px; }
.nav-m10 { margin-left: 10px; }
.status {
    margin-left: 390px;
    color: #444;
    font-size: 11px;
    font-weight: bold;
    white-space: nowrap;
}

/* timeline */
.timeline {
    height: 47px;
    flex: none;
    display: flex;
    align-items: center;
    background-color: #f1f1f1;
    border-top: 2px solid #d2d2d2;
}
.time-controls {
    margin: 5px 0 0 8px;
}
.time-gear {
    margin-left: auto;
    margin-right: 12px;
    color: #666;
}

/* windows taskbar */
.taskbar {
    height: 37px;
    flex: none;
    display: flex;
    background-color: #0b1526;
}
.start-btn {
    width: 45px;
    display: flex;
    align-items: center;
    justify-content: center;
}
.search-box {
    width: 322px;
    margin-right: 3px;
    display: flex;
    align-items: center;
    padding: 0 14px 0 9px;
    background-color: #f2f2f2;
    color: #444;
    font-family: "Open Sans", sans-serif;
    font-size: 13px;
}
.cortana {
    width: 20px;
    height: 20px;
    margin-right: 9px;
    border: 3px solid #111;
    border-radius: 50%;
}
.mic {
    margin-left: auto;
}
.task-app {
    width: 45.8px;
    flex: none;
    position: relative;
    display: flex;
    align-items: center;
    justify-content: center;
}
.task-app.open::after {
    content: "";
    position: absolute;
    left: 4px;
    right: 4px;
    bottom: 0;
    height: 2px;
    background-color: #7fbdf0;
}
.task-app.active {
    background-color: #2f3a49;
}
.task-app.active::after {
    left: 0;
    right: 0;
}
.task-gear {
    color: #fff;
}
.xl-letter {
    font-family: "Liberation Sans", sans-serif;
    font-size: 12px;
    font-weight: bold;
    fill: #fff;
}
.tray {
    margin-left: auto;
    display: flex;
    align-items: center;
    color: #ddd;
    font-size: 12px;
}
.tr-up { margin-left: 20px; }
.tr-net { margin-left: 9px; }
.tr-wifi { margin-left: 10px; }
.tr-vol { margin-left: 7.5px; }
.tr-lang {
    margin-left: 6px;
    font-size: 11.5px;
}
.tr-clock {
    width: 62px;
    margin-left: 7px;
    display: flex;
    flex-direction: column;
    align-items: center;
    gap: 3px;
    font-size: 11px;
    line-height: 14px;
}
.tr-note {
    width: 30px;
    margin-left: 13px;
    margin-right: 9px;
    position: relative;
    height: 24px;
    padding-top: 3px;
}
.note-badge {
    position: absolute;
    left: 8px;
    top: 10px;
    width: 14px;
    height: 14px;
    border-radius: 50%;
    background-color: #444;
    border: 1px solid #aaa;
    color: #fff;
    font-size: 10px;
    font-weight: bold;
    line-height: 12px;
    text-align: center;
}
```
